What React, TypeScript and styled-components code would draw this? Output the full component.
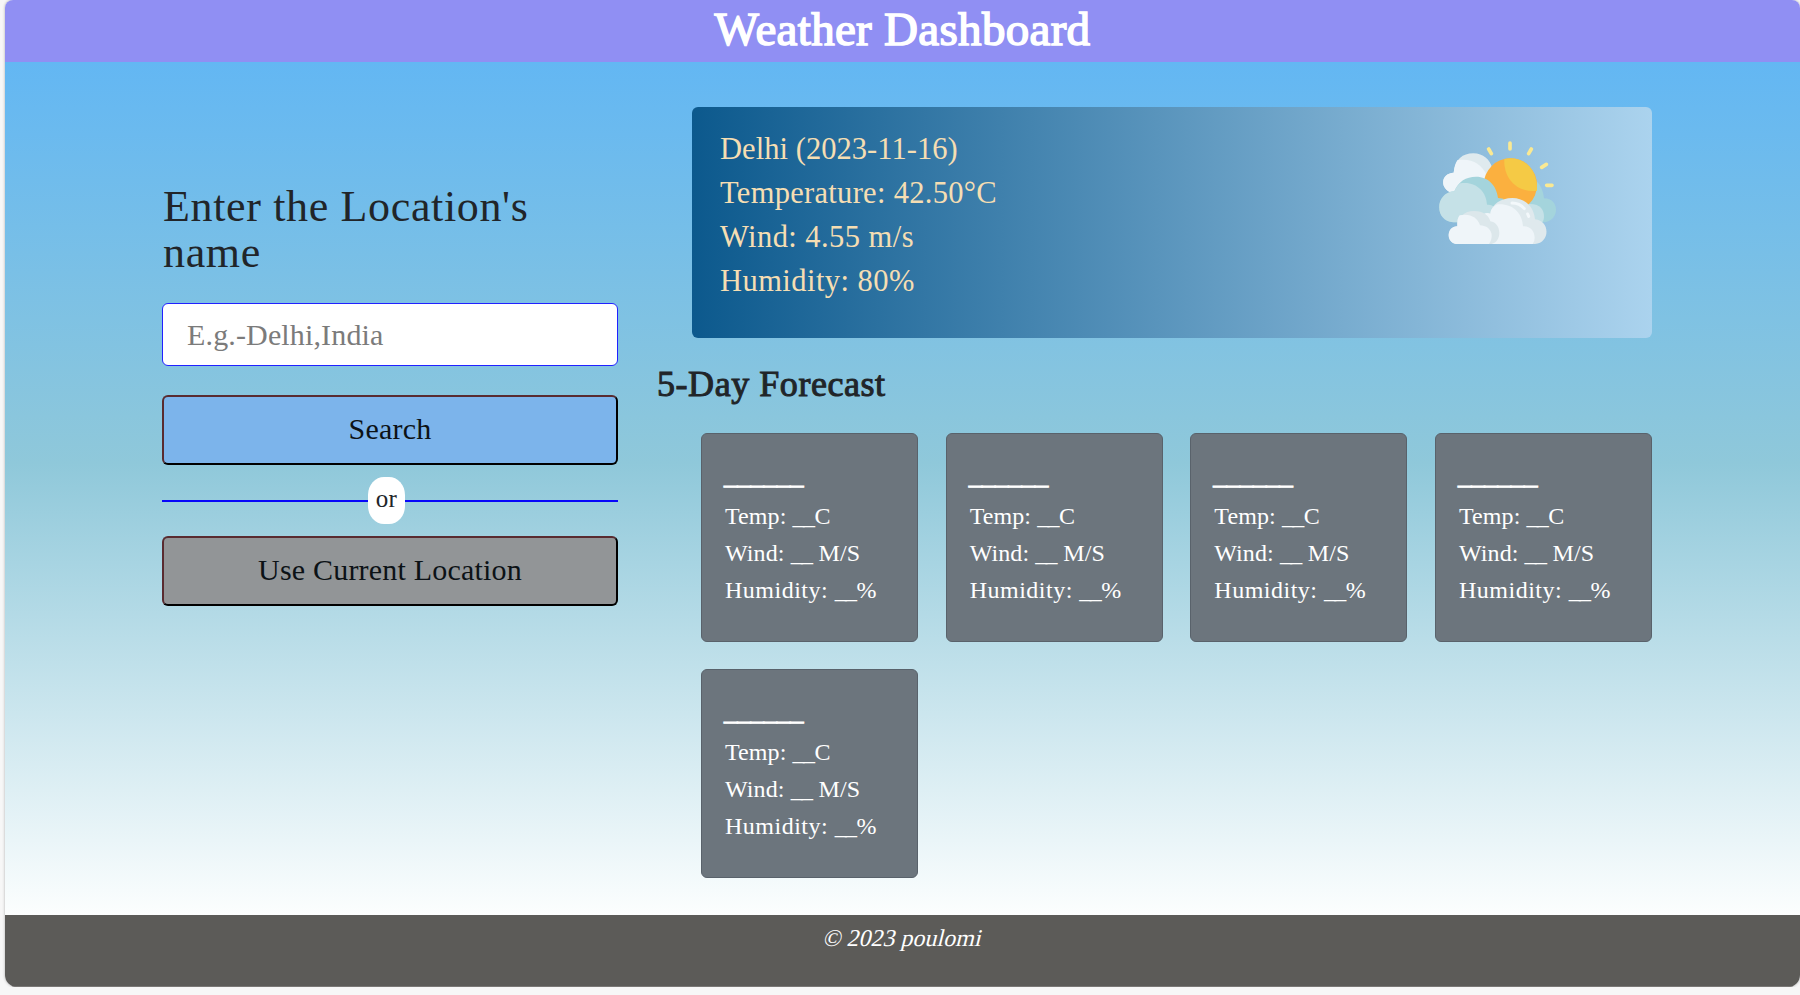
import React from "react";
import styled, { createGlobalStyle } from "styled-components";

const GlobalStyle = createGlobalStyle`
  * { box-sizing: border-box; }
  body {
    margin: 0;
    background: #f7f7f7;
    color: #212529;
    font-family: "Liberation Serif", serif;
    overflow: hidden;
  }
`;

const Page = styled.div`
  display: flex;
  flex-direction: column;
  height: 987px;
  margin-left: 5px;
  overflow: hidden;
  border-radius: 8px 8px 12px 12px;
  box-shadow: 0 0 3px rgba(0, 0, 0, 0.3);
`;

const Header = styled.header`
  height: 62px;
  padding-top: 1px;
  background: #908ff3;
  text-align: center;
`;

const Title = styled.h1`
  margin: 0;
  color: #fff;
  font-size: 47px;
  font-weight: 400;
  line-height: 56px;
  letter-spacing: 0.3px;
  -webkit-text-stroke: 1.5px #fff;
`;

const Main = styled.main`
  display: flex;
  height: 853px;
  padding: 45px 148px 0 157px;
  background: linear-gradient(#63b7f3 0%, #8fc8da 47%, #fcfefe 100%);
`;

const SearchColumn = styled.section`
  width: 456px;
  padding-top: 77px;
`;

const Prompt = styled.h2`
  margin: 0 0 27px;
  padding-left: 1px;
  font-size: 44px;
  font-weight: 400;
  line-height: 46px;
  letter-spacing: 0.65px;
`;

const LocationInput = styled.input`
  display: block;
  width: 100%;
  height: 63px;
  margin-bottom: 29px;
  padding: 0 24px;
  border: 1px solid #2121ff;
  border-radius: 6px;
  background: #fff;
  font-family: inherit;
  font-size: 30px;
  letter-spacing: 0.15px;
  outline: none;
  &::placeholder { color: #7b7b7b; opacity: 1; }
`;

const ActionButton = styled.button<{ $fill: string }>`
  display: block;
  width: 100%;
  height: 70px;
  padding: 0 0 2px;
  border: 2px solid;
  border-color: #592b30 #000 #000 #592b30;
  border-radius: 6px;
  background: ${(p) => p.$fill};
  color: #0c1216;
  font-family: inherit;
  font-size: 30px;
  letter-spacing: 0.2px;
`;

const Divider = styled.div`
  display: flex;
  align-items: center;
  height: 47px;
  margin: 12px 0;
`;

const Rule = styled.span<{ $grow: number }>`
  flex: ${(p) => p.$grow} 1 0;
  height: 2px;
  background: #0707fa;
`;

const OrBadge = styled.span`
  width: 37px;
  height: 47px;
  border-radius: 16px / 18px;
  background: #fff;
  font-size: 25px;
  line-height: 43px;
  letter-spacing: 0.3px;
  text-align: center;
`;

const WeatherColumn = styled.section`
  flex: 1;
  padding-left: 39px;
`;

const CurrentCard = styled.article`
  display: flex;
  justify-content: space-between;
  height: 231px;
  margin-left: 35px;
  padding: 20px 96px 0 28px;
  border-radius: 6px;
  background: linear-gradient(to right, #0c598d, #abd3ee);
  color: #f5deb3;
`;

const Reading = styled.p<{ $spacing: number }>`
  margin: 0;
  font-size: 30.5px;
  line-height: 44px;
  letter-spacing: ${(p) => p.$spacing}px;
`;

const ConditionIcon = styled.svg`
  width: 117px;
  height: 103px;
  margin-top: 14px;
`;

const ForecastTitle = styled.h3`
  margin: 25px 0 28px;
  font-size: 36px;
  font-weight: 400;
  line-height: 42px;
  letter-spacing: 0.55px;
  -webkit-text-stroke: 1px #212529;
`;

const ForecastGrid = styled.div`
  display: grid;
  grid-template-columns: repeat(4, 217px);
  justify-content: space-between;
  row-gap: 27px;
  margin-left: 44px;
`;

const ForecastCard = styled.article`
  height: 209px;
  padding: 25px 0 0 23px;
  border: 1px solid #59626b;
  border-radius: 6px;
  background: #6c757d;
  color: #fff;
`;

const Day = styled.h4`
  margin: 0 0 7px -1px;
  font-size: 27px;
  font-weight: 400;
  line-height: 32px;
  letter-spacing: -0.3px;
  -webkit-text-stroke: 1px #fff;
`;

const Detail = styled.p<{ $spacing?: number }>`
  margin: 0;
  font-size: 24px;
  line-height: 37.2px;
  letter-spacing: ${(p) => p.$spacing ?? 0.1}px;
`;

const Blank = styled.span`
  letter-spacing: -1.7px;
  margin-right: 1.2px;
`;

const Footer = styled.footer`
  flex: 1;
  padding: 5px 0 0 2px;
  border-bottom: 1px solid #7a7876;
  background: #5c5b58;
  color: #fff;
  text-align: center;
`;

const Copyright = styled.span`
  display: inline-block;
  font-size: 24px;
  line-height: 37px;
  transform: skewX(-14deg);
`;

const readings = [
  { text: "Delhi (2023-11-16)", spacing: 0.05 },
  { text: "Temperature: 42.50°C", spacing: 0.3 },
  { text: "Wind: 4.55 m/s", spacing: 0.45 },
  { text: "Humidity: 80%", spacing: 0.45 },
];

const days = [1, 2, 3, 4, 5];

function PartlyCloudy() {
  return (
    <ConditionIcon viewBox="57 33 351 309" aria-hidden="true">
      <g stroke="#fae992" strokeWidth="11" strokeLinecap="round">
        <path d="M270 39v18M206 57l8 14M334 57l-8 14M365 112l14-9M380 166h16" />
      </g>
      <path d="M96 188C60 178 60 130 101 128C105 88 128 70 160 70C190 70 210 90 216 112L205 165Z" fill="#dfeaee" />
      <path d="M96 188C60 178 60 130 101 128C103 112 106 100 112 91C155 84 184 102 200 135L200 165Z" fill="#eff5f9" />
      <path d="M345 150C361 162 370 182 372 205C420 205 420 272 372 277H320V180Z" fill="#a4d4dc" />
      <path d="M325 222C360 220 372 238 372 260C372 270 368 275 364 280H320Z" fill="#c5e1e7" />
      <circle cx="271" cy="165" r="80" fill="#fbb03f" />
      <path d="M253 87C305 76 354 112 351 182C290 189 250 145 253 87Z" fill="#f5ca45" />
      <path d="M100 277C43 274 43 188 103 184C115 154 138 140 168 140C206 140 230 168 234 204L250 206V277Z" fill="#a4d4dc" />
      <path d="M100 277C43 274 43 188 103 184C107 174 113 166 121 160C165 152 200 183 201 224C215 224 220 228 230 235V277Z" fill="#c5e1e7" />
      <path d="M193 251C199 248 204 248 211 251C216 223 242 204 277 204C316 204 342 232 345 268C391 272 391 338 345 342H190Z" fill="#dfe9ed" />
      <path d="M193 251C199 248 204 248 211 251C212 238 220 229 232 223C280 220 307 250 309 289C331 289 343 302 344 323Q344 335 338 342H190Z" fill="#eff5f9" />
      <path d="M276 219Q299 219 313 236M323 252L326 259" fill="none" stroke="#f3f8fb" strokeWidth="9" strokeLinecap="round" />
      <path d="M112 288C112 262 133 243 162 243C190 243 207 257 211 274C246 279 247 336 215 342H108C78 336 80 292 112 288Z" fill="#dce7eb" />
      <path d="M108 342C78 338 78 289 112 289Q110 266 119 256C148 249 174 262 180 286C215 288 224 319 207 342Z" fill="#eff5f9" />
    </ConditionIcon>
  );
}

export default function App() {
  return (
    <>
      <GlobalStyle />
      <Page>
        <Header>
          <Title>Weather Dashboard</Title>
        </Header>
        <Main>
          <SearchColumn>
            <Prompt>Enter the Location's name</Prompt>
            <LocationInput placeholder="E.g.-Delhi,India" />
            <ActionButton $fill="#7cb4eb">Search</ActionButton>
            <Divider>
              <Rule $grow={206} />
              <OrBadge>or</OrBadge>
              <Rule $grow={213} />
            </Divider>
            <ActionButton $fill="#929597">Use Current Location</ActionButton>
          </SearchColumn>
          <WeatherColumn>
            <CurrentCard>
              <div>
                {readings.map((r) => (
                  <Reading key={r.text} $spacing={r.spacing}>{r.text}</Reading>
                ))}
              </div>
              <PartlyCloudy />
            </CurrentCard>
            <ForecastTitle>5-Day Forecast</ForecastTitle>
            <ForecastGrid>
              {days.map((day) => (
                <ForecastCard key={day}>
                  <Day>______</Day>
                  <Detail>Temp: <Blank>__</Blank>C</Detail>
                  <Detail>Wind: <Blank>__</Blank> M/S</Detail>
                  <Detail $spacing={0.5}>Humidity: <Blank>__</Blank>%</Detail>
                </ForecastCard>
              ))}
            </ForecastGrid>
          </WeatherColumn>
        </Main>
        <Footer>
          <Copyright>© 2023 poulomi</Copyright>
        </Footer>
      </Page>
    </>
  );
}
